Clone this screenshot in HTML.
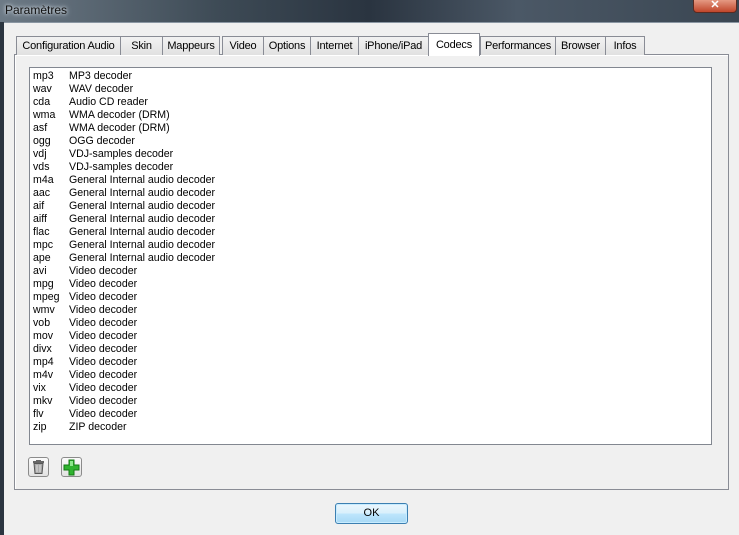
<!DOCTYPE html>
<html><head><meta charset="utf-8"><style>
*{margin:0;padding:0;box-sizing:border-box}
body{width:739px;height:535px;overflow:hidden;background:#f0f0f0;font-family:"Liberation Sans",sans-serif;font-size:11px;color:#000;position:relative}
.title{position:absolute;left:0;top:0;width:739px;height:22px;background:linear-gradient(90deg,#6d7a86 0%,#3d4a55 30%,#2a3440 50%,#4b5866 70%,#3a4652 100%);}
.title span{position:absolute;left:5px;top:3px;font-size:12px;color:#111;text-shadow:0 0 6px #cfd8e0,0 0 3px #dde5ec}
.close{position:absolute;left:693px;top:-2px;width:44px;height:15px;background:linear-gradient(#e8a08a,#c0452a);border:1px solid #5a2a20;border-radius:0 0 4px 4px;color:#fff;font-weight:bold;text-align:center;font-size:11px;line-height:12px}
.lframe{position:absolute;left:0;top:22px;width:4px;height:513px;background:#2b3540}
.inner{position:absolute;left:4px;top:22px;width:735px;height:513px;background:#f0f0f0;border-top:1px solid #8a96a2}
.panel{position:absolute;left:14px;top:54px;width:715px;height:436px;border:1px solid #898c95;background:#f0f0f0;box-shadow:inset 1px 1px 0 #fff}
.tab{position:absolute;top:36px;height:19px;border:1px solid #898c95;border-bottom:none;background:linear-gradient(#f2f2f2,#e1e1e1);text-align:center;line-height:18px;font-size:11px;letter-spacing:-0.2px}
.tab.sel{top:33px;height:23px;background:#fff;line-height:22px;z-index:2}
.list{position:absolute;left:29px;top:67px;width:683px;height:378px;background:#fff;border:1px solid #828790}
.row{position:absolute;left:3px;height:13px;line-height:13px;white-space:nowrap;font-size:10.6px}
.row b{font-weight:normal;position:absolute;left:0}
.row i{font-style:normal;position:absolute;left:36px}
.btn{position:absolute;top:457px;width:21px;height:20px;border:1px solid #8b8b8b;border-radius:3px;background:linear-gradient(#fbfbfb,#e2e2e2)}
.ok{position:absolute;left:335px;top:503px;width:73px;height:21px;border:1px solid #3c7fb1;border-radius:3px;background:linear-gradient(#eaf6fd,#d9f0fc 50%,#bee6fd 51%,#a7d9f5);text-align:center;line-height:19px;font-size:11px;box-shadow:inset 0 0 0 1px #c8ecff}
</style></head><body>
<div class="title"><span>Paramètres</span><div class="close">✕</div></div>
<div class="lframe"></div>
<div class="inner"></div>
<div class="panel"></div>
<div class="tab" style="left:16px;width:105px">Configuration Audio</div>
<div class="tab" style="left:120px;width:43px">Skin</div>
<div class="tab" style="left:162px;width:58px">Mappeurs</div>
<div class="tab" style="left:222px;width:42px">Video</div>
<div class="tab" style="left:263px;width:48px">Options</div>
<div class="tab" style="left:310px;width:49px">Internet</div>
<div class="tab" style="left:358px;width:71px">iPhone/iPad</div>
<div class="tab sel" style="left:428px;width:52px">Codecs</div>
<div class="tab" style="left:480px;width:76px">Performances</div>
<div class="tab" style="left:555px;width:51px">Browser</div>
<div class="tab" style="left:605px;width:40px">Infos</div>
<div class="list">
<div class="row" style="top:2px"><b>mp3</b><i>MP3 decoder</i></div>
<div class="row" style="top:15px"><b>wav</b><i>WAV decoder</i></div>
<div class="row" style="top:28px"><b>cda</b><i>Audio CD reader</i></div>
<div class="row" style="top:41px"><b>wma</b><i>WMA decoder (DRM)</i></div>
<div class="row" style="top:54px"><b>asf</b><i>WMA decoder (DRM)</i></div>
<div class="row" style="top:67px"><b>ogg</b><i>OGG decoder</i></div>
<div class="row" style="top:80px"><b>vdj</b><i>VDJ-samples decoder</i></div>
<div class="row" style="top:93px"><b>vds</b><i>VDJ-samples decoder</i></div>
<div class="row" style="top:106px"><b>m4a</b><i>General Internal audio decoder</i></div>
<div class="row" style="top:119px"><b>aac</b><i>General Internal audio decoder</i></div>
<div class="row" style="top:132px"><b>aif</b><i>General Internal audio decoder</i></div>
<div class="row" style="top:145px"><b>aiff</b><i>General Internal audio decoder</i></div>
<div class="row" style="top:158px"><b>flac</b><i>General Internal audio decoder</i></div>
<div class="row" style="top:171px"><b>mpc</b><i>General Internal audio decoder</i></div>
<div class="row" style="top:184px"><b>ape</b><i>General Internal audio decoder</i></div>
<div class="row" style="top:197px"><b>avi</b><i>Video decoder</i></div>
<div class="row" style="top:210px"><b>mpg</b><i>Video decoder</i></div>
<div class="row" style="top:223px"><b>mpeg</b><i>Video decoder</i></div>
<div class="row" style="top:236px"><b>wmv</b><i>Video decoder</i></div>
<div class="row" style="top:249px"><b>vob</b><i>Video decoder</i></div>
<div class="row" style="top:262px"><b>mov</b><i>Video decoder</i></div>
<div class="row" style="top:275px"><b>divx</b><i>Video decoder</i></div>
<div class="row" style="top:288px"><b>mp4</b><i>Video decoder</i></div>
<div class="row" style="top:301px"><b>m4v</b><i>Video decoder</i></div>
<div class="row" style="top:314px"><b>vix</b><i>Video decoder</i></div>
<div class="row" style="top:327px"><b>mkv</b><i>Video decoder</i></div>
<div class="row" style="top:340px"><b>flv</b><i>Video decoder</i></div>
<div class="row" style="top:353px"><b>zip</b><i>ZIP decoder</i></div>
</div>
<div class="btn" style="left:28px"><svg width="19" height="18" viewBox="0 0 19 18"><rect x="4" y="3" width="11" height="2" fill="#666"/><rect x="7" y="2" width="5" height="1.5" fill="#666"/><path d="M5 5.5h9l-1 10h-7z" fill="#aaa" stroke="#555" stroke-width="1"/><path d="M8 7v7M11 7v7" stroke="#ddd"/></svg></div>
<div class="btn" style="left:61px"><svg width="19" height="18" viewBox="0 0 19 18"><path d="M7 2h5v5h5v5h-5v5h-5v-5h-5v-5h5z" fill="#2fb32f" stroke="#137a13" stroke-width="1"/><path d="M8 3h3v5h-3z" fill="#8be88b"/></svg></div>
<div class="ok">OK</div>
</body></html>
